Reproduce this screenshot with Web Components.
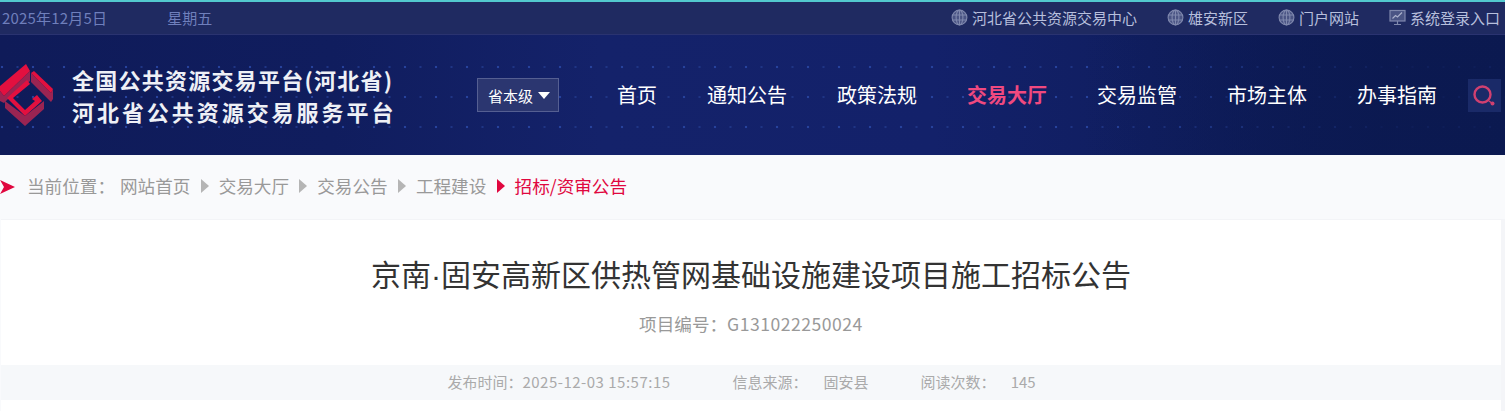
<!DOCTYPE html>
<html lang="zh"><head><meta charset="utf-8"><style>
html,body{margin:0;padding:0;background:#f9fafc;font-family:"Noto Sans CJK SC","Liberation Sans",sans-serif;overflow:hidden}
</style></head><body>
<site-header></site-header>
<crumb-bar>
<a>网站首页</a><a>交易大厅</a><a>交易公告</a><a>工程建设</a><a class="cur">招标/资审公告</a>
</crumb-bar>
<notice-card></notice-card>
<script>
const globe=`<svg width="17" height="17" viewBox="0 0 17 17" fill="none" stroke="#7f88ad" stroke-width="1.1"><circle cx="8.5" cy="8.5" r="7.4" fill="#4a5484"/><ellipse cx="8.5" cy="8.5" rx="3.4" ry="7.4"/><path d="M8.5 1v15M1.4 6h14.2M1.4 11h14.2"/></svg>`;
const monitor=`<svg width="17" height="17" viewBox="0 0 17 17" fill="none" stroke="#7f88ad" stroke-width="1.2"><rect x="1" y="1.5" width="15" height="10.5" fill="#4a5484"/><path d="M3.5 9.5l3-3 2 1.5 4.5-4.5" stroke="#aab0cc"/><path d="M8.5 12v3M5 15.5h7"/></svg>`;
class SiteHeader extends HTMLElement{constructor(){super();this.attachShadow({mode:'open'}).innerHTML=`<style>
:host{display:block;height:155px;color:#fff;background:#101c5c;border-top:2px solid #52c9cf;box-sizing:border-box}
.top{height:33px;box-sizing:border-box;background:#1f2a61;border-bottom:1px solid #2a3370;display:flex;align-items:center;font-size:15px;color:#6f7fbc;padding:0 5px 2px 2px;line-height:1}
.top .d{letter-spacing:.2px}
.top .wk{margin-left:60px}
.top .links{margin-left:auto;display:flex;color:#b7bfdc}
.top .links span{display:flex;align-items:center;gap:4px;margin-left:30px}
.main{height:120px;display:flex;align-items:center;
 background:
 linear-gradient(90deg,transparent 72%,#0b1950d9 92%),
 radial-gradient(circle at 2px 2px,#27429c 1.1px,transparent 1.6px) 0 30px/31px 4px repeat-x,
 radial-gradient(circle at 2px 2px,#1f3585 .8px,transparent 1.3px) 15.5px 30px/31px 4px repeat-x,
 radial-gradient(circle at 2px 2px,#27429c 1.1px,transparent 1.6px) 0 60px/31px 4px repeat-x,
 radial-gradient(circle at 2px 2px,#1f3585 .8px,transparent 1.3px) 15.5px 60px/31px 4px repeat-x,
 radial-gradient(circle at 2px 2px,#27429c 1.1px,transparent 1.6px) 0 90px/31px 4px repeat-x,
 radial-gradient(circle at 2px 2px,#1f3585 .8px,transparent 1.3px) 15.5px 90px/31px 4px repeat-x,
 linear-gradient(90deg,#0f1b59 0,#101d5e 22%,#14226a 40%,#13216a 62%,#0b1950 100%)}
.logo{display:flex;align-items:center;width:477px;flex:none}
.logo svg{display:block;flex:none;filter:blur(.35px)}
.name{margin-left:12px;font-weight:700;font-size:22px;line-height:32px;white-space:nowrap;color:#eef0f6}
.name span{display:block}
.l1{letter-spacing:1.25px}.l2{letter-spacing:2.95px}
.lvl{width:82px;height:34px;box-sizing:border-box;border:1px solid #555f92;background:#2b3670;display:flex;align-items:center;justify-content:center;gap:5px;font-size:15px;flex:none;padding-left:2px}
.lvl i{width:0;height:0;border:6.5px solid transparent;border-top:7px solid #fff;border-bottom:0}
nav{display:flex;gap:50px;margin-left:58px;font-size:20px;line-height:1}
nav b{font-weight:700;color:#f0497f}
nav span{white-space:nowrap}
.srch{margin-left:31px;width:33px;height:33px;background:#1a2a68;display:flex;align-items:center;justify-content:center;flex:none}
</style>
<div class="top"><span class="d">2025年12月5日</span><span class="wk">星期五</span>
<div class="links"><span>${globe}河北省公共资源交易中心</span><span>${globe}雄安新区</span><span>${globe}门户网站</span><span>${monitor}系统登录入口</span></div></div>
<div class="main"><div class="logo">
<svg width="60" height="72" viewBox="0 58 60 72">
<path d="M30 70V80L8 98 4 102 0 100V90L4 95Z" fill="#9a2452"/>
<path d="M26 63 30 70 4 95 0 90V85Z" fill="#e2103f"/>
<path d="M5 100V107L25 125 44 108V100L25 115Z" fill="#9a2452"/>
<path d="M31 72 51 92 53 88V98L51 101 31 81Z" fill="#9a2452"/>
<path d="M31 72 34 70 53 88 51 92Z" fill="#e2103f"/>
<path d="M27 79 7 97 25 115 42 100 37 94 32 98 35 100 25 109 13 97 30 83Z" fill="#e2103f"/>
</svg>
<div class="name"><span class="l1">全国公共资源交易平台(河北省)</span><span class="l2">河北省公共资源交易服务平台</span></div></div>
<div class="lvl">省本级<i></i></div>
<nav><span>首页</span><span>通知公告</span><span>政策法规</span><b>交易大厅</b><span>交易监管</span><span>市场主体</span><span>办事指南</span></nav>
<div class="srch"><svg width="24" height="24" viewBox="0 0 24 24" fill="none"><circle cx="9.5" cy="11.5" r="8" stroke="#d04070" stroke-width="2.4"/><path d="M16 18l3.5 2.5" stroke="#d04070" stroke-width="1.5"/><circle cx="19.5" cy="20.5" r="2" fill="#d04070"/></svg></div>
</div>`}}
class CrumbBar extends HTMLElement{constructor(){super();this.attachShadow({mode:'open'}).innerHTML=`<style>
:host{display:flex;align-items:center;height:64px;box-sizing:border-box;font-size:17.6px;color:#999;white-space:nowrap}
.arrow{display:block;margin-right:11px;flex:none}
.lab{margin-right:5px}
.lab,.list{margin-bottom:3px}
.list{display:flex;align-items:center}
::slotted(a){display:inline-flex;align-items:center}
::slotted(a:not(:first-child))::before{content:"";width:0;height:0;margin:0 10px 0 10.25px;border:7px solid transparent;border-right:0;border-left:8px solid #b5b5b5}
::slotted(.cur){color:#e0073f}
::slotted(.cur)::before{border-left-color:#e0073f !important}
</style><svg class="arrow" width="16" height="16" viewBox="0 0 16 16"><path d="M0 1 15 8 0 15 4 8Z" fill="#e0073f"/></svg><span class="lab">当前位置：</span><div class="list"><slot></slot></div>`;
}}
class NoticeCard extends HTMLElement{constructor(){super();this.attachShadow({mode:'open'}).innerHTML=`<style>
:host{display:block;margin:0 0 0 1px;background:#fff;border-top:1px solid #f3f4f7;border-right:4px solid #f4f5f8;height:192px;color:#333;text-align:center}
h1{margin:0;padding-top:33px;font-weight:400;font-size:30px;line-height:40px;color:#333}
h1 span{font-family:"Liberation Sans",sans-serif;line-height:0}
.no{margin-top:18px;font-size:17.6px;line-height:26px;color:#999}
.no span,.meta .n{letter-spacing:.5px}
.meta{margin-top:28px;height:35px;box-sizing:border-box;background:#f6f8fa;display:flex;align-items:center;justify-content:center;font-size:15px;color:#aaa;padding:0 19px 2px 0}
.meta span{white-space:nowrap}
</style><h1>京南<span>·</span>固安高新区供热管网基础设施建设项目施工招标公告</h1>
<div class="no">项目编号：<span>G131022250024</span></div>
<div class="meta"><span>发布时间：</span><span class="n">2025-12-03 15:57:15</span><span style="margin-left:62px">信息来源：</span><span style="margin-left:16px">固安县</span><span style="margin-left:52px">阅读次数：</span><span style="margin-left:15px">145</span></div>`}}
customElements.define('site-header',SiteHeader);customElements.define('crumb-bar',CrumbBar);customElements.define('notice-card',NoticeCard);
</script></body></html>
